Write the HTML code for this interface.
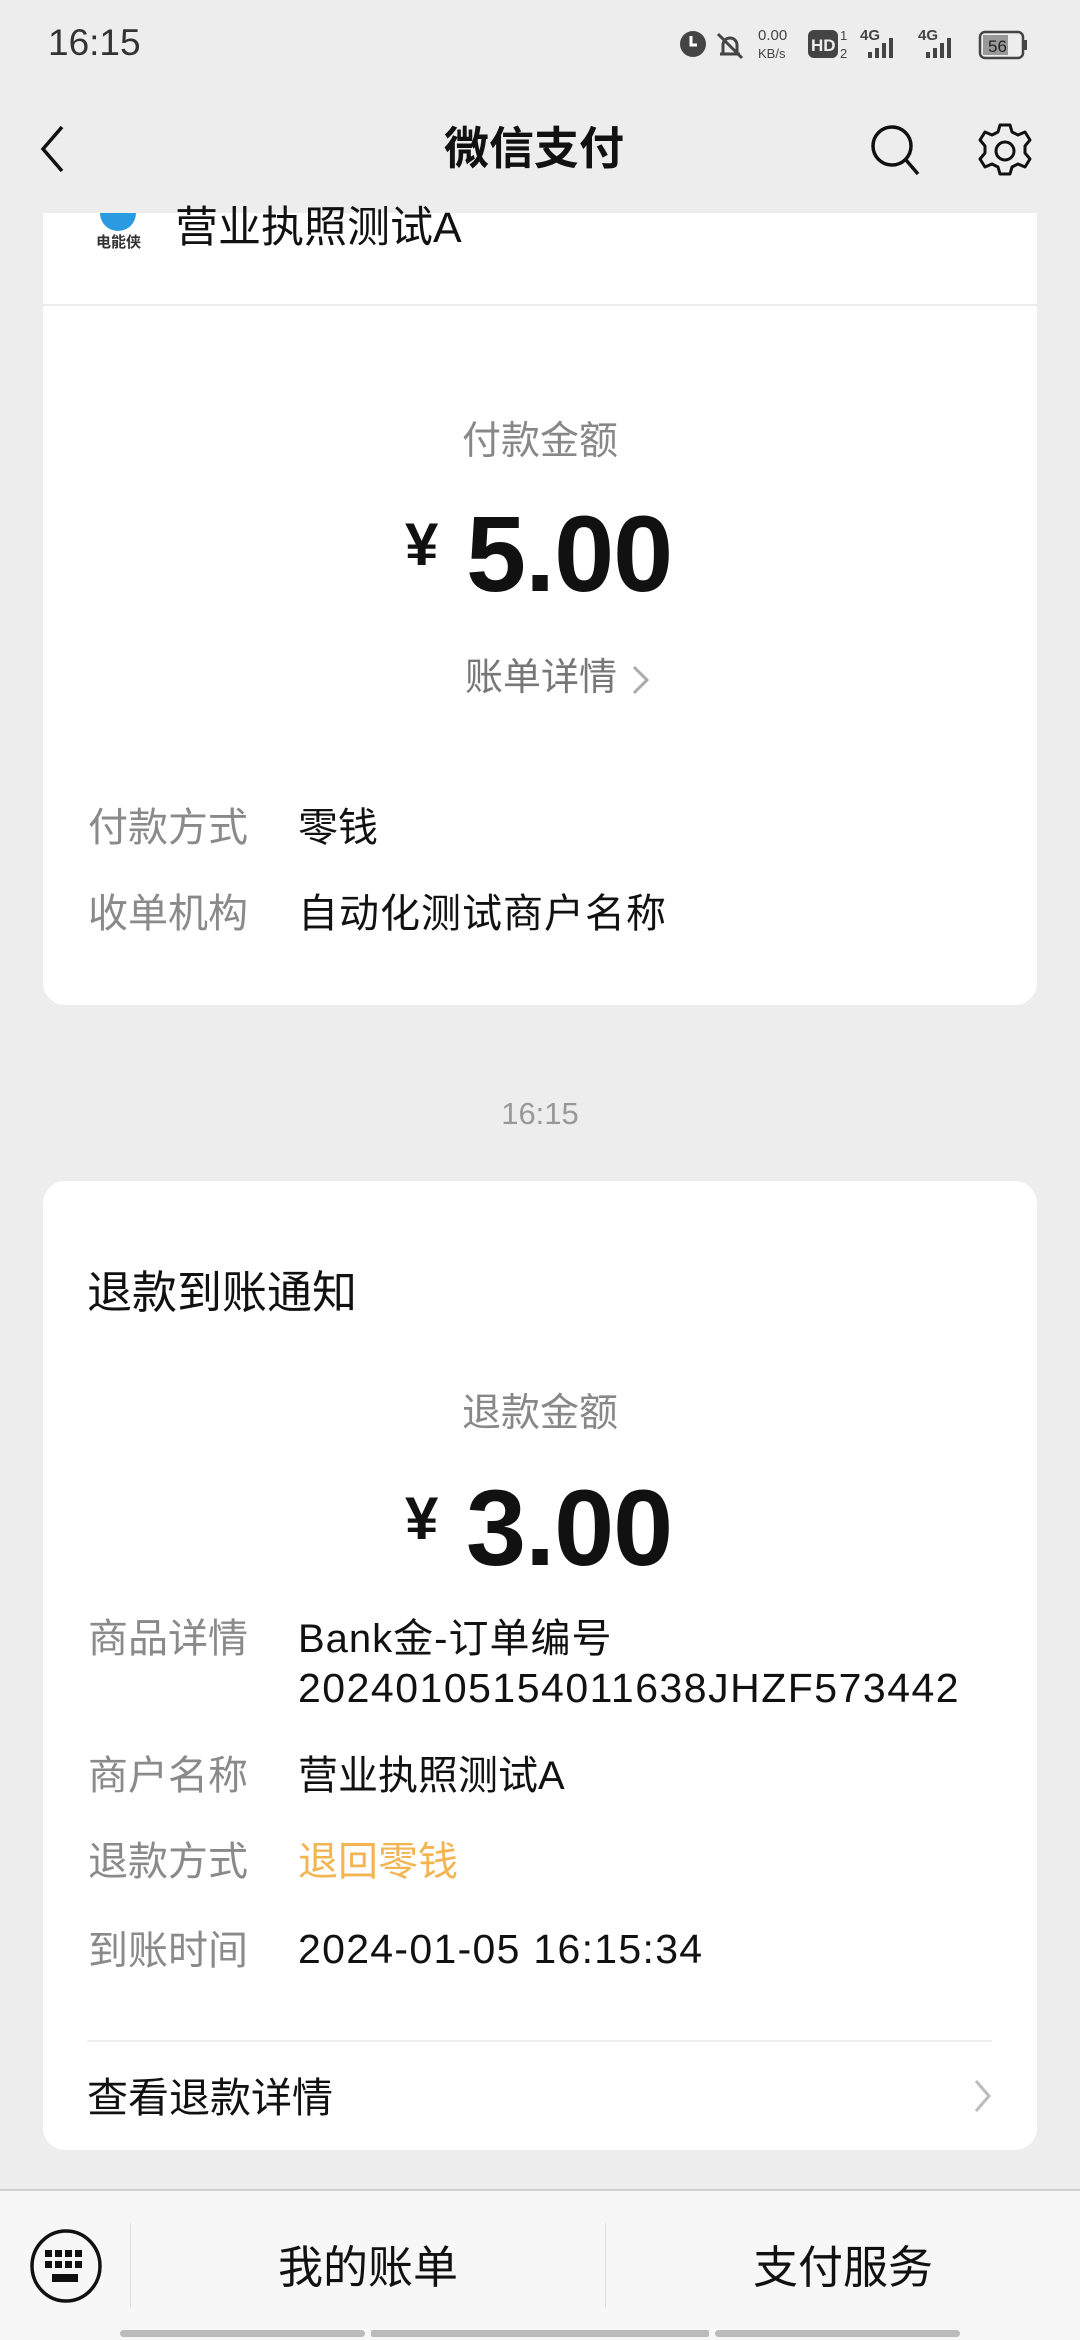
<!DOCTYPE html>
<html><head><meta charset="utf-8"><style>
*{margin:0;padding:0;box-sizing:border-box}
body{width:1080px;height:2340px;background:#ededed;font-family:"Liberation Sans","Noto Sans CJK SC",sans-serif;position:relative;overflow:hidden;color:#111}
.a{position:absolute;white-space:nowrap;line-height:1}
.card{position:absolute;left:43px;width:994px;background:#fff;border-radius:22px}
.lbl{position:absolute;left:88px;font-size:40px;color:#8a8a8a;line-height:1}
.val{position:absolute;left:298px;font-size:40px;color:#111;line-height:1;white-space:nowrap}
</style></head><body>
<!-- card 1 -->
<div class="card" style="top:190px;height:815px"></div>
<div class="a" style="left:0;top:0;width:1080px;height:213px;background:#ededed"></div>
<!-- status bar -->
<div class="a" style="left:48px;top:24px;font-size:37px;color:#333">16:15</div>
<div class="a" style="left:678px;top:24px;font-size:22px;color:#444">
<svg width="360" height="40" viewBox="0 0 360 40">
<circle cx="15" cy="20" r="13" fill="#444"/><path d="M13 12v9h6" stroke="#fff" stroke-width="3" fill="none"/>
<path d="M42 30h20M45 30v-9a7 7 0 0 1 14 0v9M40 10l24 24" stroke="#444" stroke-width="3" fill="none"/>
<text x="80" y="16" font-size="15" fill="#444" font-family="Liberation Sans">0.00</text><text x="80" y="34" font-size="13" fill="#444" font-family="Liberation Sans">KB/s</text>
<rect x="130" y="6" width="30" height="28" rx="6" fill="#444"/><text x="133" y="27" font-size="17" font-weight="bold" fill="#eee" font-family="Liberation Sans">HD</text>
<text x="162" y="16" font-size="13" fill="#444">1</text><text x="162" y="34" font-size="13" fill="#444">2</text>
<text x="182" y="16" font-size="15" font-weight="bold" fill="#444">4G</text>
<rect x="190" y="28" width="4" height="6" fill="#444"/><rect x="197" y="24" width="4" height="10" fill="#444"/><rect x="204" y="19" width="4" height="15" fill="#444"/><rect x="211" y="14" width="4" height="20" fill="#444"/>
<text x="240" y="16" font-size="15" font-weight="bold" fill="#444">4G</text>
<rect x="248" y="28" width="4" height="6" fill="#444"/><rect x="255" y="24" width="4" height="10" fill="#444"/><rect x="262" y="19" width="4" height="15" fill="#444"/><rect x="269" y="14" width="4" height="20" fill="#444"/>
<rect x="302" y="8" width="43" height="26" rx="5" fill="none" stroke="#444" stroke-width="2.5"/><rect x="305" y="11" width="25" height="20" fill="#999"/><rect x="346" y="16" width="3" height="10" fill="#444"/>
<text x="310" y="28" font-size="17" fill="#222">56</text>
</svg></div>
<!-- header -->
<svg class="a" style="left:38px;top:124px" width="30" height="50"><path d="M24 3 L5 25 L24 47" stroke="#111" stroke-width="3.5" fill="none"/></svg>
<div class="a" style="left:444px;top:126px;font-size:45px;font-weight:bold;color:#111">微信支付</div>
<svg class="a" style="left:868px;top:122px" width="56" height="56"><circle cx="24" cy="24" r="19" stroke="#111" stroke-width="3.5" fill="none"/><path d="M38 38 L50 52" stroke="#111" stroke-width="3.5"/></svg>
<svg class="a" style="left:976px;top:122px" width="58" height="58" viewBox="0 0 58 58"><path d="M24 3h10l2 7 6 3 7-3 5 8-5 6v7l5 6-5 8-7-3-6 3-2 7h-10l-2-7-6-3-7 3-5-8 5-6v-7l-5-6 5-8 7 3 6-3z" stroke="#111" stroke-width="3" fill="none" stroke-linejoin="round"/><circle cx="29" cy="29" r="9" stroke="#111" stroke-width="3" fill="none"/></svg>
<div class="a" style="left:43px;top:304px;width:994px;height:2px;background:#ececec"></div>
<div class="a" style="left:100px;top:213px;width:36px;height:18px;background:#2a9be0;border-radius:0 0 18px 18px"></div>
<div class="a" style="left:96px;top:235px;font-size:15px;color:#333;font-weight:bold">电能侠</div>
<div class="a" style="left:175px;top:207px;font-size:43px;color:#111">营业执照测试A</div>
<div class="a" style="left:0;width:1080px;text-align:center;top:422px;font-size:39px;color:#888">付款金额</div>
<div class="a" style="left:405px;top:515px;font-size:60px;font-weight:bold">¥</div>
<div class="a" style="left:466px;top:500px;font-size:108px;font-weight:bold;letter-spacing:-1px">5.00</div>
<div class="a" style="left:465px;top:659px;font-size:38px;color:#777">账单详情</div>
<svg class="a" style="left:630px;top:664px" width="22" height="32"><path d="M4 3l13 13-13 13" stroke="#aaa" stroke-width="3" fill="none"/></svg>
<div class="lbl" style="top:808px">付款方式</div><div class="val" style="top:808px">零钱</div>
<div class="lbl" style="top:894px">收单机构</div><div class="val" style="top:894px;letter-spacing:1px">自动化测试商户名称</div>
<div class="a" style="left:0;width:1080px;text-align:center;top:1098px;font-size:31px;color:#999">16:15</div>
<!-- card 2 -->
<div class="card" style="top:1181px;height:969px"></div>
<div class="a" style="left:87px;top:1270px;font-size:45px;color:#111">退款到账通知</div>
<div class="a" style="left:0;width:1080px;text-align:center;top:1394px;font-size:39px;color:#888">退款金额</div>
<div class="a" style="left:405px;top:1489px;font-size:60px;font-weight:bold">¥</div>
<div class="a" style="left:466px;top:1474px;font-size:108px;font-weight:bold;letter-spacing:-1px">3.00</div>
<div class="lbl" style="top:1619px">商品详情</div><div class="val" style="top:1619px;letter-spacing:1px">Bank金-订单编号</div>
<div class="val" style="top:1668px;font-size:41px;letter-spacing:1.5px">20240105154011638JHZF573442</div>
<div class="lbl" style="top:1756px">商户名称</div><div class="val" style="top:1756px">营业执照测试A</div>
<div class="lbl" style="top:1842px">退款方式</div><div class="val" style="top:1842px;color:#f3b452">退回零钱</div>
<div class="lbl" style="top:1931px">到账时间</div><div class="val" style="top:1929px;font-size:41px;letter-spacing:1.3px">2024-01-05 16:15:34</div>
<div class="a" style="left:87px;top:2040px;width:905px;height:2px;background:#efefef"></div>
<div class="a" style="left:87px;top:2078px;font-size:41px;color:#111">查看退款详情</div>
<svg class="a" style="left:972px;top:2078px" width="22" height="36"><path d="M4 3l13 15-13 15" stroke="#bbb" stroke-width="3" fill="none"/></svg>
<!-- bottom bar -->
<div class="a" style="left:0;top:2189px;width:1080px;height:151px;background:#f7f7f7;border-top:2px solid #d0d0d0"></div>
<svg class="a" style="left:28px;top:2228px" width="76" height="76"><ellipse cx="38" cy="38" rx="34" ry="35" stroke="#111" stroke-width="3.5" fill="none"/>
<g fill="#111"><rect x="17" y="22" width="7" height="7"/><rect x="27" y="22" width="7" height="7"/><rect x="37" y="22" width="7" height="7"/><rect x="47" y="22" width="7" height="7"/><rect x="17" y="33" width="7" height="7"/><rect x="27" y="33" width="7" height="7"/><rect x="37" y="33" width="7" height="7"/><rect x="47" y="33" width="7" height="7"/><rect x="24" y="46" width="26" height="8"/></g></svg>
<div class="a" style="left:130px;top:2223px;width:1px;height:85px;background:#e0e0e0"></div>
<div class="a" style="left:605px;top:2223px;width:1px;height:85px;background:#e0e0e0"></div>
<div class="a" style="left:278px;top:2245px;font-size:45px;color:#111">我的账单</div>
<div class="a" style="left:753px;top:2245px;font-size:45px;color:#111">支付服务</div>
<div class="a" style="left:120px;top:2330px;width:245px;height:7px;background:#bbb;border-radius:4px"></div>
<div class="a" style="left:371px;top:2330px;width:338px;height:7px;background:#bbb;border-radius:2px"></div>
<div class="a" style="left:715px;top:2330px;width:245px;height:7px;background:#bbb;border-radius:4px"></div>
</body></html>
